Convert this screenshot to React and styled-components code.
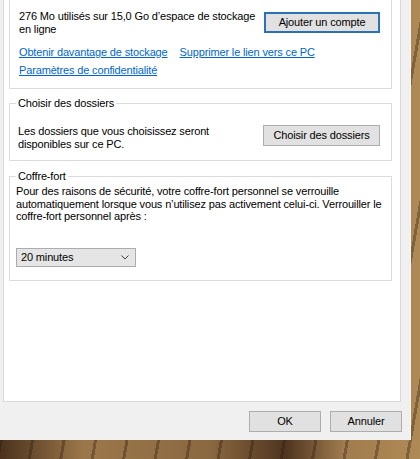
import React from 'react';
import styled, { createGlobalStyle } from 'styled-components';

const GlobalStyle = createGlobalStyle`
  html, body {
    margin: 0;
    padding: 0;
  }
  body {
    font-family: "Liberation Sans", Arial, sans-serif;
    font-size: 11px;
    letter-spacing: -0.15px;
    color: #000;
    background: #7d5d38;
  }
`;

const Desktop = styled.div`
  width: 420px;
  height: 459px;
  overflow: hidden;
  background:
    repeating-linear-gradient(
      100deg,
      rgba(40, 25, 10, 0) 0 14px,
      rgba(40, 25, 10, 0.35) 14px 17px,
      rgba(40, 25, 10, 0) 17px 31px
    ),
    linear-gradient(
      90deg,
      #4a321d 0%,
      #9c774a 20%,
      #8a6840 50%,
      #4f3520 68%,
      #a07c4e 82%,
      #b08a55 100%
    );
`;

const Dialog = styled.div`
  width: 411px;
  height: 440px;
  background: #f0f0f0;
  display: flex;
  flex-direction: column;
  box-sizing: border-box;
  border-right: 1px solid #f8f8f8;
`;

const TabPanel = styled.div`
  height: 402px;
  margin: 0 9px 0 3px;
  box-sizing: border-box;
  background: #fff;
  border: 1px solid #d9d9d9;
  border-top: none;
  padding: 0 8px 0 5px;
  display: flex;
  flex-direction: column;
`;

const Group = styled.fieldset`
  margin: ${(p) => p.$top || 0}px 0 0;
  min-width: 0;
  padding: 0;
  border: 1px solid #dcdcdc;
  border-top: ${(p) => (p.$cropped ? 'none' : '1px solid #dcdcdc')};
`;

const Legend = styled.legend`
  margin-left: 6px;
  padding: 0 2px;
  line-height: 13px;
  font-size: 11px;
`;

const GroupBody = styled.div`
  padding: ${(p) => p.$pad};
`;

const Row = styled.div`
  display: flex;
  align-items: flex-start;
`;

const Text = styled.div`
  flex: 0 0 ${(p) => p.$width || 240}px;
  line-height: 13px;
`;

const Paragraph = styled.p`
  margin: 0;
  line-height: 12.5px;
`;

const Button = styled.button`
  box-sizing: border-box;
  width: ${(p) => p.$width}px;
  height: 21px;
  margin: ${(p) => p.$margin || 0};
  padding: 0;
  background: #e1e1e1;
  border: 1px solid ${(p) => (p.$default ? '#2b72b4' : '#adadad')};
  box-shadow: ${(p) => (p.$default ? 'inset 0 0 0 1px #2b72b4' : 'none')};
  font-family: inherit;
  font-size: 11px;
  letter-spacing: inherit;
  color: #000;
  line-height: 19px;
`;

const Links = styled.div`
  display: flex;
  flex-direction: column;
  gap: 5px;
  margin-top: 10px;
`;

const LinkLine = styled.div`
  display: flex;
  gap: 12px;
  line-height: 13px;
`;

const Link = styled.a`
  color: #0066cc;
  text-decoration: underline;
  cursor: pointer;
`;

const Select = styled.div`
  box-sizing: border-box;
  width: 120px;
  height: 19px;
  margin-top: 25px;
  padding: 0 6px 0 4px;
  display: flex;
  align-items: center;
  justify-content: space-between;
  background: #e5e5e5;
  border: 1px solid #acacac;
  line-height: 17px;
`;

const Footer = styled.div`
  flex: 1;
  display: flex;
  justify-content: flex-end;
  align-items: flex-start;
  gap: 9px;
  padding: 9px 8px 0 0;
`;

function Chevron() {
  return (
    <svg width="8" height="5" viewBox="0 0 8 5">
      <path d="M0.5 0.5 L4 4 L7.5 0.5" fill="none" stroke="#444" strokeWidth="1" />
    </svg>
  );
}

export default function App() {
  return (
    <Desktop>
      <GlobalStyle />
      <Dialog>
        <TabPanel>
          <Group $cropped>
            <GroupBody $pad="10px 11px 11px 9px">
              <Row>
                <Text $width={244}>
                  276 Mo utilisés sur 15,0 Go d’espace de stockage en ligne
                </Text>
                <Button $default $width={116} $margin="2px 0 0 auto">
                  Ajouter un compte
                </Button>
              </Row>
              <Links>
                <LinkLine>
                  <Link>Obtenir davantage de stockage</Link>
                  <Link>Supprimer le lien vers ce PC</Link>
                </LinkLine>
                <LinkLine>
                  <Link>Paramètres de confidentialité</Link>
                </LinkLine>
              </Links>
            </GroupBody>
          </Group>

          <Group $top={8}>
            <Legend>Choisir des dossiers</Legend>
            <GroupBody $pad="15px 11px 9px 8px">
              <Row>
                <Text $width={240}>
                  Les dossiers que vous choisissez seront disponibles sur ce PC.
                </Text>
                <Button $width={117} $margin="0 0 0 auto">
                  Choisir des dossiers
                </Button>
              </Row>
            </GroupBody>
          </Group>

          <Group $top={9}>
            <Legend>Coffre-fort</Legend>
            <GroupBody $pad="2px 3px 13px 6px">
              <Paragraph>
                Pour des raisons de sécurité, votre coffre-fort personnel se
                verrouille automatiquement lorsque vous n’utilisez pas
                activement celui-ci. Verrouiller le coffre-fort personnel
                après :
              </Paragraph>
              <Select>
                <span>20 minutes</span>
                <Chevron />
              </Select>
            </GroupBody>
          </Group>
        </TabPanel>
        <Footer>
          <Button $width={72}>OK</Button>
          <Button $width={72}>Annuler</Button>
        </Footer>
      </Dialog>
    </Desktop>
  );
}
